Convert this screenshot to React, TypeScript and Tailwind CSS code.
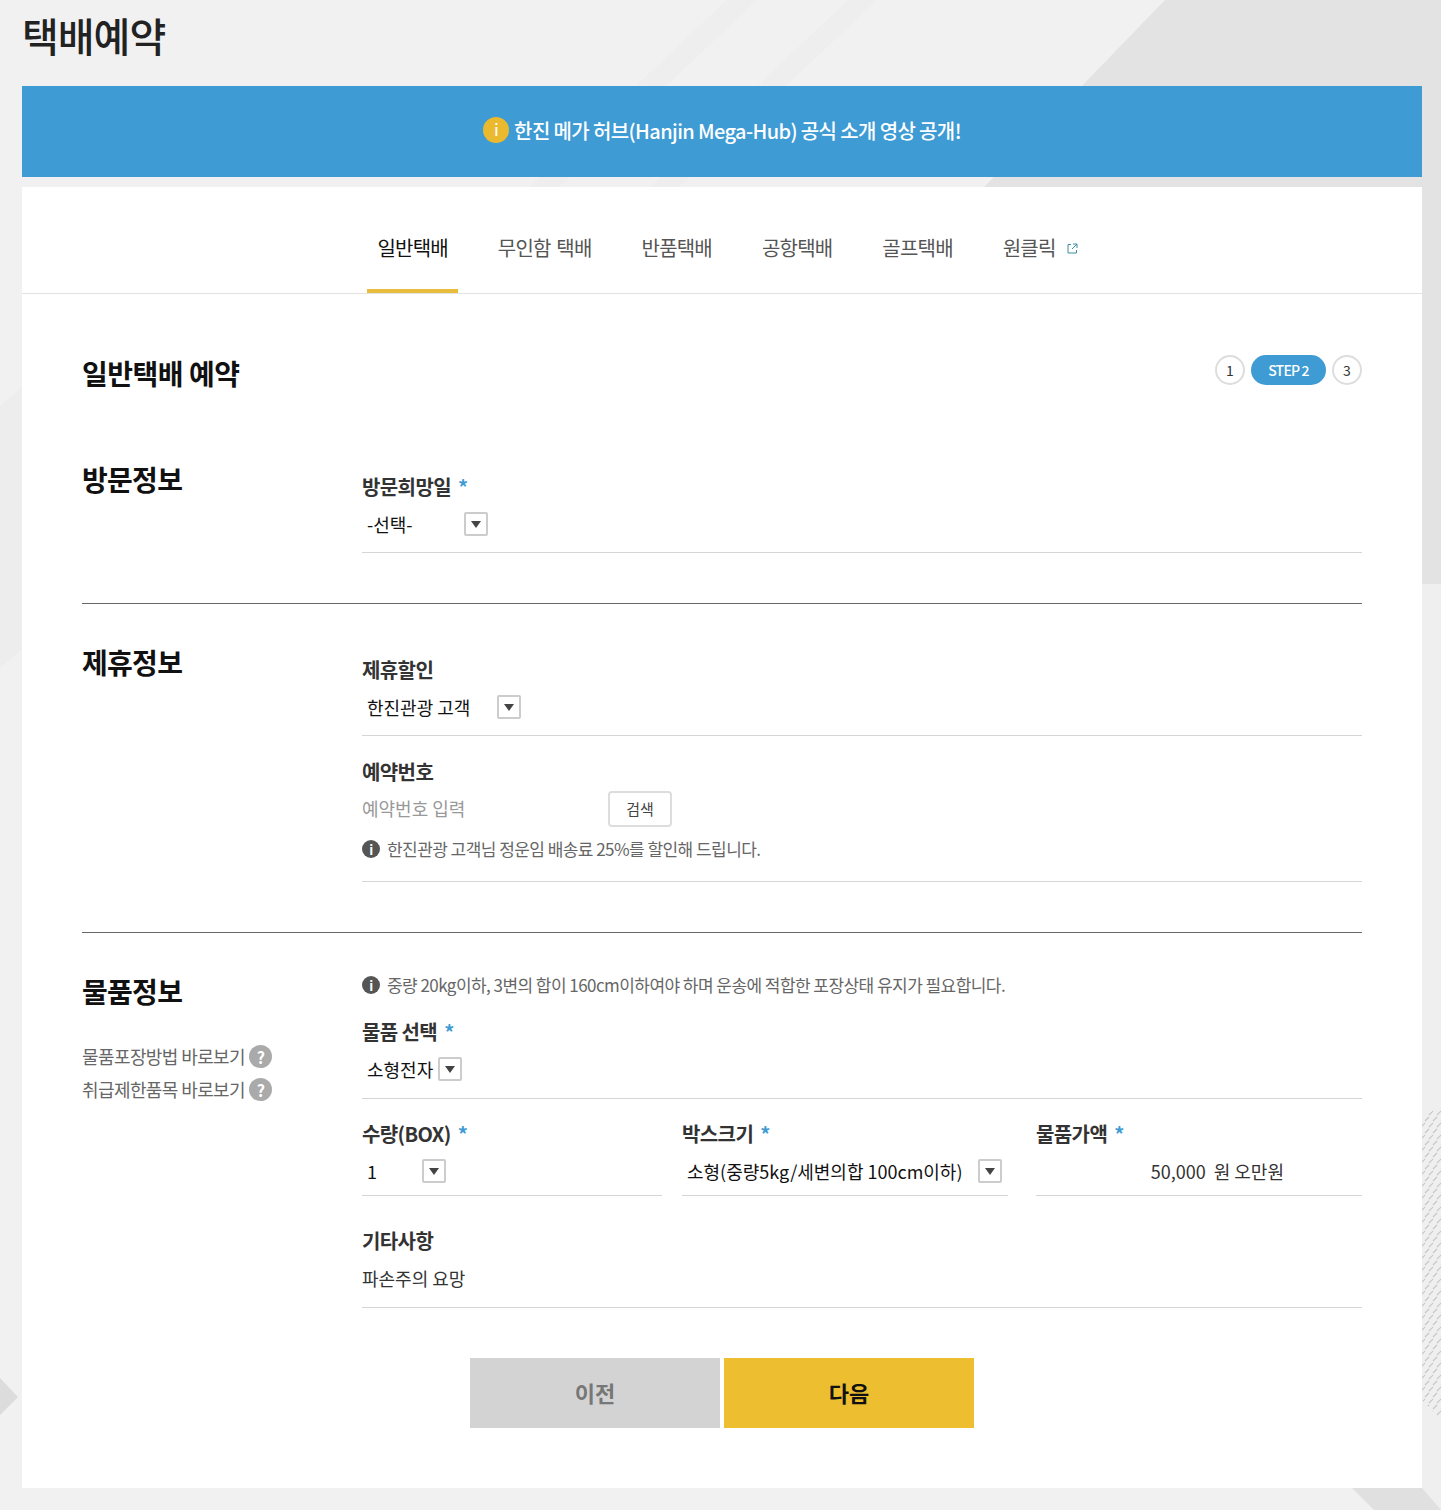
const FONT = "font-['Noto_Sans_CJK_KR','Noto_Sans',sans-serif]";

function Star() {
  return <span className="ml-[7px] text-[20px] font-bold leading-none text-[#3e9bd4]">*</span>;
}

function Label({ children, required }: { children: React.ReactNode; required?: boolean }) {
  return (
    <div className="flex h-[30px] items-center pt-[1px] text-[20px] font-semibold tracking-[-0.6px] text-[#333]">
      {children}
      {required && <Star />}
    </div>
  );
}

function SelectBox({ value, width }: { value: string; width: number }) {
  return (
    <div className="flex h-[46px] items-center pl-[5px] text-[18px] text-[#111]">
      <span className="whitespace-nowrap" style={{ width }}>
        {value}
      </span>
      <span className="flex size-6 items-center justify-center rounded-[2px] border-2 border-[#ccc] bg-white">
        <span className="h-0 w-0 border-x-[5px] border-t-[7px] border-x-transparent border-t-[#444]" />
      </span>
    </div>
  );
}

function InfoIcon() {
  return (
    <span className="mr-[7px] flex size-[18px] shrink-0 items-center justify-center rounded-full bg-[#555] text-[13px] font-bold leading-none text-white">
      i
    </span>
  );
}

function Notice({ children }: { children: React.ReactNode }) {
  return (
    <div className="flex h-6 items-center text-[17px] tracking-[-0.55px] text-[#666]">
      <InfoIcon />
      {children}
    </div>
  );
}

function Heading({ children }: { children: React.ReactNode }) {
  return <h3 className="mt-10 h-9 text-[28px] font-bold leading-9 tracking-[-0.7px] text-[#111]">{children}</h3>;
}

function HelpLink({ children }: { children: React.ReactNode }) {
  return (
    <div className="flex h-[33px] items-center text-[18px] tracking-[-0.6px] text-[#666]">
      {children}
      <span className="ml-1 flex size-[23px] items-center justify-center rounded-full bg-[#aaa] text-[16px] font-bold text-white">?</span>
    </div>
  );
}

function Background() {
  return (
    <svg className="absolute inset-0" width="1441" height="1510" viewBox="0 0 1441 1510">
      <rect width="1441" height="1510" fill="#f1f1f1" />
      <polygon points="727,0 757,0 559,187 529,187" fill="#eeeeee" />
      <polygon points="848,0 877,0 679,187 650,187" fill="#eeeeee" />
      <polygon points="1165,0 1441,0 1441,584 600,584" fill="#e3e3e3" />
      <rect x="1422" y="584" width="19" height="926" fill="#efefef" />
      <polygon points="0,406 22,387 22,649 0,668" fill="#ededed" />
      <polygon points="0,1378 18,1397 0,1415" fill="#dcdcdc" />
      <polygon points="1352,1488 1422,1488 1441,1510 1374,1510" fill="#e0e0e0" />
      <defs>
        <pattern id="hatch" width="8" height="12" patternUnits="userSpaceOnUse">
          <path d="M1 5 L5 1 M5 11 L9 7 M-3 11 L1 7" stroke="#c6c6c6" strokeWidth="1.2" />
        </pattern>
      </defs>
      <polygon points="1422,1118 1441,1105 1441,1420 1422,1400" fill="url(#hatch)" />
    </svg>
  );
}

export default function App() {
  const tabs = ["일반택배", "무인함 택배", "반품택배", "공항택배", "골프택배", "원클릭"];
  return (
    <div className={`relative h-[1510px] w-[1441px] overflow-hidden ${FONT}`}>
      <Background />
      <div className="relative pl-[22px] pr-[19px]">
        <h1 className="flex h-[86px] items-center pb-[16px] text-[40px] font-medium tracking-[-1px] text-[#222]">택배예약</h1>

        <div className="flex h-[91px] items-center justify-center bg-[#3e9bd4] pb-[1px] text-[20px] font-medium tracking-[-0.62px] text-white">
          <span className="mb-[2px] mr-[5px] flex size-[26px] items-center justify-center rounded-full bg-[#eab92d] text-[15px]">i</span>
          한진 메가 허브(Hanjin Mega-Hub) 공식 소개 영상 공개!
        </div>

        <div className="mt-[10px] bg-white">
          <nav className="flex h-[107px] items-end justify-center border-b border-[#e2e2e2] pl-[11px] text-[20px] tracking-[-0.8px] text-[#555] [word-spacing:2px]">
            {tabs.map((t, i) => (
              <a
                key={t}
                className={`flex h-[92px] items-center px-[10px] ${i > 0 ? "ml-[30px] pt-[2px]" : ""} ${
                  i === 0 ? "border-b-4 border-[#e8bd3d] pt-[6px] text-[#111]" : ""
                }`}
              >
                {t}
                {t === "원클릭" && (
                  <svg className="ml-[11px]" width="11" height="11" viewBox="0 0 11 11" fill="none" stroke="#3e8ea0" strokeWidth="1">
                    <path d="M4 1.500H1v8.500h8.500V7M6 1h4v4M10 1 5 6" />
                  </svg>
                )}
              </a>
            ))}
          </nav>

          <div className="px-[60px] pb-[60px]">
            <div className="flex h-[127px] items-start justify-between pt-[61px]">
              <h2 className="text-[28px] font-bold leading-9 tracking-[-0.5px] text-[#111]">일반택배 예약</h2>
              <div className="flex items-center gap-[6px] text-[14px] text-[#333]">
                <span className="flex size-[30px] items-center justify-center rounded-full border-2 border-[#ddd]">1</span>
                <span className="flex h-[30px] w-[75px] items-center justify-center rounded-full bg-[#3e9bd4] font-medium tracking-[-0.8px] text-white">STEP 2</span>
                <span className="flex size-[30px] items-center justify-center rounded-full border-2 border-[#ddd]">3</span>
              </div>
            </div>

            <section className="flex border-b border-[#666] pb-[50px]">
              <div className="w-[280px] shrink-0"><Heading>방문정보</Heading></div>
              <div className="flex-1 pt-[50px]">
                <div className="border-b border-[#d5d5d5] pb-[5px]">
                  <Label required>방문희망일</Label>
                  <SelectBox value="-선택-" width={97} />
                </div>
              </div>
            </section>

            <section className="flex border-b border-[#666] pb-[50px]">
              <div className="w-[280px] shrink-0"><Heading>제휴정보</Heading></div>
              <div className="flex-1 pt-[50px]">
                <div className="border-b border-[#d5d5d5] pb-[5px]">
                  <Label>제휴할인</Label>
                  <SelectBox value="한진관광 고객" width={130} />
                </div>
                <div className="border-b border-[#d5d5d5] pb-5 pt-5">
                  <Label>예약번호</Label>
                  <div className="flex h-[46px] items-center">
                    <span className="w-[246px] pb-[2px] text-[18px] text-[#999]">예약번호 입력</span>
                    <button className="h-9 w-16 rounded-[4px] border-2 border-[#ddd] bg-white text-[15px] text-[#444]">검색</button>
                  </div>
                  <div className="mt-[5px]">
                    <Notice>한진관광 고객님 정운임 배송료 25%를 할인해 드립니다.</Notice>
                  </div>
                </div>
              </div>
            </section>

            <section className="flex">
              <div className="w-[280px] shrink-0">
                <Heading>물품정보</Heading>
                <div className="mt-[31px]">
                  <HelpLink>물품포장방법 바로보기</HelpLink>
                  <HelpLink>취급제한품목 바로보기</HelpLink>
                </div>
              </div>
              <div className="flex-1 pt-10">
                <Notice>중량 20kg이하, 3변의 합이 160cm이하여야 하며 운송에 적합한 포장상태 유지가 필요합니다.</Notice>
                <div className="mt-[19px] border-b border-[#d5d5d5] pb-[6px]">
                  <Label required>물품 선택</Label>
                  <SelectBox value="소형전자" width={71} />
                </div>
                <div className="flex pt-[19px]">
                  <div className="w-[300px] border-b border-[#d5d5d5] pb-[1px]">
                    <Label required>수량(BOX)</Label>
                    <SelectBox value="1" width={55} />
                  </div>
                  <div className="ml-5 w-[326px] border-b border-[#d5d5d5] pb-[1px]">
                    <Label required>박스크기</Label>
                    <SelectBox value="소형(중량5kg/세변의합 100cm이하)" width={291} />
                  </div>
                  <div className="ml-7 w-[326px] border-b border-[#d5d5d5] pb-[1px]">
                    <Label required>물품가액</Label>
                    <div className="flex h-[46px] items-center justify-end pr-[78px] text-[18px] text-[#333]">
                      50,000&nbsp;&nbsp;원 오만원
                    </div>
                  </div>
                </div>
                <div className="border-b border-[#d5d5d5] pb-[6px] pt-[29px]">
                  <Label>기타사항</Label>
                  <div className="flex h-[46px] items-center text-[18px] text-[#333]">파손주의 요망</div>
                </div>
              </div>
            </section>

            <div className="mt-[50px] flex justify-center gap-1 text-[22px] font-bold">
              <button className="h-[70px] w-[250px] bg-[#d3d3d3] pb-[2px] text-[#777]">이전</button>
              <button className="h-[70px] w-[250px] bg-[#ecbe30] pb-[2px] text-[#111]">다음</button>
            </div>
          </div>
        </div>
      </div>
    </div>
  );
}
